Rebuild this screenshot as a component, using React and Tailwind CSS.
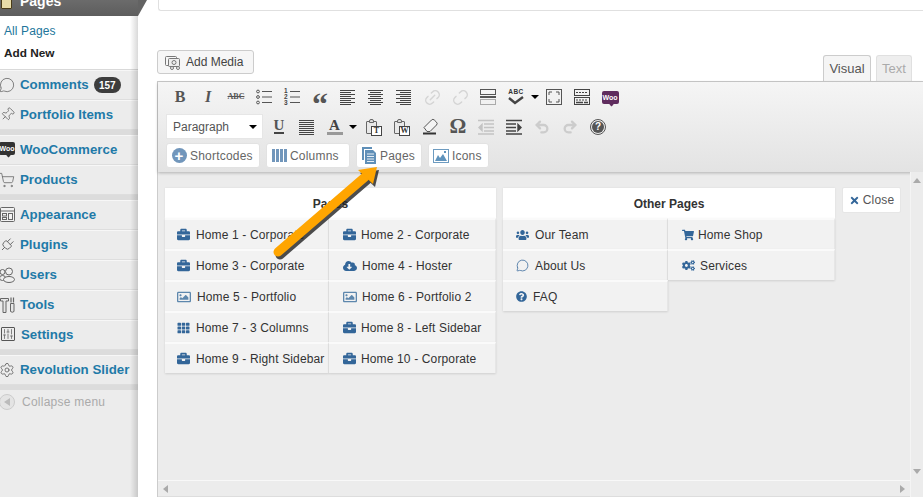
import {
  FaBriefcase, FaCloudDownloadAlt, FaRegImage, FaTh, FaUsers, FaShoppingCart, FaCogs, FaQuestionCircle, FaTimes,
} from 'react-icons/fa';
import {
  MessageCircle, Pin, ShoppingCart, Plug, SlidersVertical, Settings, Undo2, Redo2, Link2, Unlink2,
} from 'lucide-react';

const WooBadge = ({ bg }) => (
  <span className={`relative flex h-[13px] w-[17px] items-center justify-center rounded-[2px] text-[7px] font-bold leading-none text-white ${bg}`}>
    Woo
    <span className="absolute -bottom-[2px] left-[8px] h-[3px] w-[3px] rotate-45 bg-inherit" />
  </span>
);

const AppearanceIcon = () => (
  <svg width="15" height="15" viewBox="0 0 15 15" fill="#f2f2f2" stroke="#666">
    <rect x="0.5" y="0.5" width="14" height="14" rx="1" />
    <path d="M0.5 4h14" />
    <rect x="2.5" y="6.5" width="4" height="2.5" />
    <rect x="2.5" y="10.5" width="4" height="2" />
    <rect x="8.5" y="6.5" width="4" height="6" />
  </svg>
);
const UsersIcon = () => (
  <svg width="16" height="16" viewBox="0 0 16 16" fill="#eee" stroke="#666">
    <circle cx="3.5" cy="5" r="2.5" />
    <ellipse cx="3.5" cy="11" rx="3" ry="2.5" />
    <circle cx="10" cy="4.5" r="3.5" />
    <ellipse cx="10" cy="12.5" rx="5.5" ry="3" />
  </svg>
);
const ToolsIcon = () => (
  <svg width="15" height="16" viewBox="0 0 15 16" fill="#e6e6e6" stroke="#666">
    <path d="M0.5 1.5h8v2.5h-2.5v11.5h-3V4H0.5z" />
    <path d="M11 0.5v5M13.5 0.5v5" strokeWidth="1.2" />
    <path d="M10.5 6.5h3.5v8q-1.7 1.5-3.5 0z" />
  </svg>
);
const EraserIcon = () => (
  <svg width="17" height="17" viewBox="0 0 17 17">
    <path d="M2 9.5L9.5 2a2 2 0 0 1 2.8 0l2.2 2.2a2 2 0 0 1 0 2.8L8 13.5H5z" fill="#f4f4f4" stroke="#555" />
    <path d="M1 15.5h13" stroke="#333" strokeWidth="2" />
  </svg>
);
const HelpIcon = () => (
  <span className="flex h-[16px] w-[16px] items-center justify-center rounded-full border border-[#555] p-[1px]">
    <span className="flex h-full w-full items-center justify-center rounded-full bg-[#555] text-[10px] font-bold leading-none text-white">?</span>
  </span>
);

const menu = [
  [
    { label: 'Comments', icon: <MessageCircle className="h-[16px] w-[16px]" strokeWidth={1.2} />, badge: '157' },
    { label: 'Portfolio Items', icon: <Pin className="h-[15px] w-[15px] rotate-45" strokeWidth={1.3} /> },
  ],
  [
    { label: 'WooCommerce', icon: <WooBadge bg="bg-[#333]" /> },
    { label: 'Products', icon: <ShoppingCart className="h-[16px] w-[16px]" strokeWidth={1.2} /> },
  ],
  [
    { label: 'Appearance', icon: <AppearanceIcon /> },
    { label: 'Plugins', icon: <Plug className="h-[16px] w-[16px] rotate-45" strokeWidth={1.4} /> },
    { label: 'Users', icon: <UsersIcon /> },
    { label: 'Tools', icon: <ToolsIcon /> },
    { label: 'Settings', icon: <SlidersVertical className="h-[14px] w-[14px] rounded-[1px] border border-[#555]" strokeWidth={1.6} />, shift: true },
  ],
  [{ label: 'Revolution Slider', icon: <Settings className="h-[16px] w-[16px]" strokeWidth={1.3} /> }],
];

function Sidebar() {
  return (
    <aside className="relative z-10 flex h-[497px] w-[138px] shrink-0 flex-col bg-[#ececec] font-['Liberation_Sans',sans-serif]">
      <div className="relative -mt-[13px] flex h-[29px] shrink-0 items-center gap-[6px] bg-gradient-to-b from-[#777] to-[#5d5d5d] pl-[20px] text-[14px] font-bold text-white">
        <span className="absolute left-[1px] top-[9px] h-[13px] w-[11px] rounded-[1px] border border-[#4a3c18] bg-[#e8dca8]" />
        Pages
        <svg className="absolute left-full top-[13px]" width="10" height="16" viewBox="0 0 10 16">
          <polygon points="0,0 9,0 0,16" fill="#636363" />
        </svg>
      </div>
      <div className="flex h-[54px] shrink-0 flex-col gap-[7px] border-b border-[#d9d9d9] bg-white pl-[4px] pt-[8px] text-[12px] leading-[15px]">
        <span className="tracking-[0.1px] text-[#21759b]">All Pages</span>
        <span className="text-[11.8px] font-bold text-[#222]">Add New</span>
      </div>
      {menu.map((group, i) => (
        <div key={i} className="border-b-[5px] border-b-[#dcdcdc] last:border-b-0">
          {group.map((item) => (
            <div key={item.label} className="relative flex h-[30px] items-center border-b border-[#dedede] border-t border-t-[#f7f7f7] pl-[20px] text-[13.3px] font-bold text-[#1f7aa8]">
              <span className={`absolute top-[6px] flex w-[16px] justify-center text-[#666] ${item.shift ? 'left-0' : '-left-[1px]'}`}>{item.icon}</span>
              <span className={item.shift ? 'ml-[1px]' : ''}>{item.label}</span>
              {item.badge && (
                <span className="ml-[5px] flex h-[16px] w-[27px] items-center justify-center rounded-full bg-[#3d3d3d] text-[10px] text-white">{item.badge}</span>
              )}
            </div>
          ))}
        </div>
      ))}
      <div className="mt-[3px] flex items-center gap-[7px] text-[12px] tracking-[0.25px] text-[#aaa]">
        <span className="-ml-[1px] flex h-[16px] w-[16px] items-center justify-center rounded-full border border-[#ccc] bg-[#e4e4e4]">
          <span className="h-0 w-0 border-y-[4px] border-r-[6px] border-y-transparent border-r-[#bbb]" />
        </span>
        Collapse menu
      </div>
      <div className="pointer-events-none absolute bottom-0 right-0 top-[16px] w-[8px] bg-gradient-to-r from-transparent to-black/15" />
    </aside>
  );
}

// toolbar drawings
const Lines = ({ rows, color = '#444' }) => (
  <svg width="16" height="16" viewBox="0 0 16 16" stroke={color} strokeWidth="1">
    {rows.map(([x1, x2], i) => (
      <line key={i} x1={x1} x2={x2} y1={1.5 + i * 2} y2={1.5 + i * 2} />
    ))}
  </svg>
);
const left = [[0, 15], [0, 11], [0, 15], [0, 11], [0, 15], [0, 11], [0, 15], [0, 11]];
const center = [[0, 15], [2, 13], [0, 15], [2, 13], [0, 15], [2, 13], [0, 15], [2, 13]];
const right = [[0, 15], [4, 15], [0, 15], [4, 15], [0, 15], [4, 15], [0, 15], [4, 15]];
const justify = [[0, 15], [0, 15], [0, 15], [0, 15], [0, 15], [0, 15], [0, 15], [0, 15]];

const Bullets = () => (
  <svg width="16" height="16" viewBox="0 0 16 16" fill="none" stroke="#555">
    {[2.5, 8, 13.5].map((y) => (
      <g key={y}>
        <circle cx="2" cy={y} r="1.4" />
        <line x1="6" x2="16" y1={y} y2={y} />
      </g>
    ))}
  </svg>
);
const Numbers = () => (
  <span className="relative block h-[16px] w-[16px]">
    <span className="absolute left-0 top-[-1px] font-['Liberation_Sans',sans-serif] text-[6.5px] font-bold leading-[6px] text-[#444]">1<br />2<br />3</span>
    <svg className="absolute left-0 top-0" width="16" height="16" stroke="#555">
      {[2.5, 8, 13.5].map((y) => <line key={y} x1="6" x2="16" y1={y} y2={y} />)}
    </svg>
  </span>
);
const Paste = ({ letter }) => (
  <span className="relative block h-[16px] w-[16px]">
    <span className="absolute left-0 top-[2px] h-[13px] w-[11px] rounded-[1px] border border-[#666] bg-[#e8e8e8]" />
    <span className="absolute left-[3px] top-0 h-[4px] w-[5px] rounded-t-[2px] border border-[#666] bg-[#ddd]" />
    <span className="absolute bottom-[-1px] right-0 flex h-[10px] w-[11px] items-center justify-center border border-[#444] bg-white font-['Liberation_Serif',serif] text-[8px] font-bold leading-none text-[#333]">{letter}</span>
  </span>
);
const Caret = () => <span className="block h-0 w-0 border-x-[4px] border-t-[4px] border-x-transparent border-t-black" />;

const Hr = () => (
  <svg width="16" height="16" viewBox="0 0 16 16" fill="none" stroke="#555">
    <rect x="0.5" y="0.5" width="15" height="5" />
    <line x1="0" x2="16" y1="8" y2="8" strokeWidth="2" />
    <rect x="0.5" y="10.5" width="15" height="5" stroke="#aaa" />
  </svg>
);
const Spell = () => (
  <span className="flex h-[18px] w-[18px] flex-col items-center">
    <span className="font-['Liberation_Sans',sans-serif] text-[6.5px] font-bold leading-[8px] tracking-[0.5px] text-[#333]">ABC</span>
    <svg width="16" height="9" viewBox="0 0 16 9" fill="none" stroke="#444" strokeWidth="2.4"><path d="M1 2l6 5 8-6" /></svg>
  </span>
);
const Fullscreen = () => (
  <svg width="16" height="16" viewBox="0 0 16 16" fill="none" stroke="#555">
    <rect x="0.5" y="0.5" width="15" height="15" />
    <path d="M3 6V3h3M10 3h3v3M13 10v3h-3M6 13H3v-3" />
  </svg>
);
const Kitchen = () => (
  <svg width="16" height="16" viewBox="0 0 16 16" fill="none" stroke="#444">
    <rect x="0.5" y="0.5" width="15" height="6" />
    <rect x="0.5" y="8.5" width="15" height="7" />
    <path d="M2 3.5h12M2 11h12" strokeDasharray="2 1" />
    <path d="M2 13.5h7M10 13.5h4" strokeWidth="1.6" />
  </svg>
);
const Outdent = ({ color = '#c4c4c4', flip }) => (
  <svg className={flip ? '-scale-x-100' : ''} width="16" height="16" viewBox="0 0 16 16" stroke={color} strokeWidth="1.4" fill="none">
    <path d="M0 1.5h16M6 5h10M6 8.5h10M6 12h10M0 15h16" />
    <path d="M4 5.5L1 8.5l3 3z" fill={color} />
  </svg>
);

const T = ({ children, w = 'w-[28px]' }) => <span className={`flex h-[24px] shrink-0 items-center justify-center ${w}`}>{children}</span>;

const serif = "font-['Liberation_Serif',serif]";

function Toolbar() {
  return (
    <div className="flex h-[90px] shrink-0 flex-col bg-gradient-to-b from-[#f5f5f5] to-[#e3e3e3] pl-[8px] shadow-[0_1px_3px_rgba(0,0,0,0.25)]">
      <div className="flex h-[30px] shrink-0 items-center">
        <T><span className={`${serif} text-[16px] font-bold text-[#555]`}>B</span></T>
        <T><span className={`${serif} text-[16px] font-bold italic text-[#555]`}>I</span></T>
        <T><span className={`${serif} text-[8px] font-bold text-[#555] line-through`}>ABC</span></T>
        <T><Bullets /></T>
        <T><Numbers /></T>
        <T><span className={`${serif} mt-[13px] text-[32px] font-bold leading-[16px] text-[#555]`}>“</span></T>
        <T><Lines rows={left} /></T>
        <T><Lines rows={center} /></T>
        <T><Lines rows={right} /></T>
        <T><Link2 className="h-[19px] w-[19px] -rotate-45 text-[#d4d4d4]" strokeWidth={1.8} /></T>
        <T><Unlink2 className="h-[19px] w-[19px] -rotate-45 text-[#d4d4d4]" strokeWidth={1.8} /></T>
        <T><Hr /></T>
        <T><Spell /></T>
        <T w="w-[10px]"><Caret /></T>
        <T><Fullscreen /></T>
        <T><Kitchen /></T>
        <T><WooBadgeBig /></T>
      </div>
      <div className="mt-[2px] flex h-[25px] shrink-0 items-center">
        <div className="flex h-[25px] w-[97px] shrink-0 items-center justify-between border border-[#e6e6e6] bg-white pl-[6px] pr-[5px] font-['Liberation_Sans',sans-serif] text-[12px] text-[#555]">
          Paragraph
          <Caret />
        </div>
        <span className="w-[2px] shrink-0" />
        <T><span className={`${serif} border-b-2 border-[#444] text-[15px] font-bold leading-[13px] text-[#555]`}>U</span></T>
        <T><Lines rows={justify} /></T>
        <T w="w-[27px]">
          <span className={`${serif} w-[16px] border-b-[3px] border-[#999] text-center text-[15px] font-bold leading-[14px] text-[#444]`}>A</span>
        </T>
        <T w="w-[10px]"><Caret /></T>
        <span className="w-[2px] shrink-0" />
        <T><Paste letter="T" /></T>
        <T><Paste letter="W" /></T>
        <T><EraserIcon /></T>
        <T><span className={`${serif} text-[21px] font-bold leading-none text-[#555]`}>Ω</span></T>
        <T><Outdent /></T>
        <T><Outdent color="#444" flip /></T>
        <T><Undo2 className="h-[16px] w-[16px] text-[#ccc]" strokeWidth={3.5} /></T>
        <T><Redo2 className="h-[16px] w-[16px] text-[#ccc]" strokeWidth={3.5} /></T>
        <T><HelpIcon /></T>
      </div>
      <div className="mt-[4px] flex gap-[6px] font-['Liberation_Sans',sans-serif] text-[12px] tracking-[0.2px] text-[#666]">
        <Btn w="w-[94px]" icon={<span className="flex h-[15px] w-[15px] items-center justify-center rounded-full bg-[#7196bb] text-[15px] font-bold leading-none text-white">+</span>} label="Shortcodes" />
        <Btn w="w-[84px]" icon={<span className="flex h-[13px] w-[15px] gap-[1px]">{[0, 1, 2, 3].map((c) => <span key={c} className="flex-1 bg-[#7196bb]" />)}</span>} label="Columns" />
        <Btn w="w-[66px]" icon={<PagesIcon />} label="Pages" />
        <Btn w="w-[61px]" icon={<PictureIcon />} label="Icons" />
      </div>
    </div>
  );
}

const WooBadgeBig = () => <WooBadge bg="bg-[#5f2c5e]" />;

const PagesIcon = () => (
  <svg width="15" height="17" viewBox="0 0 15 17">
    <path d="M0 0h10v2H2v11H0z" fill="#5f8fb8" />
    <path d="M3 3h8l3 3v11H3z" fill="#5f8fb8" />
    <path d="M5 7h7M5 9.5h7M5 12h7M5 14.5h7" stroke="#e6eef5" />
  </svg>
);
const PictureIcon = () => (
  <svg width="16" height="14" viewBox="0 0 16 14">
    <rect x="0.5" y="0.5" width="15" height="13" fill="#fff" stroke="#6d9bc0" />
    <path d="M2 12l3-6 2 3 3-4 4 7z" fill="#5f93bc" />
    <rect x="11" y="2" width="2" height="2" fill="#5f93bc" />
  </svg>
);

const Btn = ({ w, icon, label }) => (
  <span className={`flex h-[25px] shrink-0 items-center gap-[3px] rounded-[3px] border border-[#e2e2e2] bg-white pl-[4px] ${w}`}>
    <span className="flex w-[16px] justify-center">{icon}</span>
    {label}
  </span>
);

const bc = 'h-[13px] w-[13px] shrink-0 text-[#336699]';
const pic = 'h-[14px] w-[14px] shrink-0 text-[#5d87ad]';
const pages = [
  [<FaBriefcase className={bc} />, 'Home 1 - Corporate'],
  [<FaBriefcase className={bc} />, 'Home 2 - Corporate'],
  [<FaBriefcase className={bc} />, 'Home 3 - Corporate'],
  [<FaCloudDownloadAlt className="h-[14px] w-[14px] shrink-0 text-[#336699]" />, 'Home 4 - Hoster'],
  [<FaRegImage className={pic} />, 'Home 5 - Portfolio'],
  [<FaRegImage className={pic} />, 'Home 6 - Portfolio 2'],
  [<FaTh className="h-[12px] w-[13px] shrink-0 text-[#336699]" />, 'Home 7 - 3 Columns'],
  [<FaBriefcase className={bc} />, 'Home 8 - Left Sidebar'],
  [<FaBriefcase className={bc} />, 'Home 9 - Right Sidebar'],
  [<FaBriefcase className={bc} />, 'Home 10 - Corporate'],
];
const others = [
  [<FaUsers className="h-[14px] w-[13px] shrink-0 scale-y-110 text-[#336699]" />, 'Our Team'],
  [<FaShoppingCart className="mr-[-1px] h-[12px] w-[12px] shrink-0 text-[#336699]" />, 'Home Shop'],
  [<MessageCircle className="h-[13px] w-[13px] shrink-0 text-[#336699]" strokeWidth={1.4} />, 'About Us'],
  [<FaCogs className="h-[13px] w-[13px] shrink-0 text-[#336699]" />, 'Services'],
  [<FaQuestionCircle className="h-[11px] w-[11px] shrink-0 text-[#336699]" />, 'FAQ'],
];

function Panel({ title, items, w, cols, pad }) {
  return (
    <div className={`flex shrink-0 flex-col ${w}`}>
      <div className="flex h-[30px] items-center justify-center bg-white pt-[1px] text-[12px] font-bold text-[#333] shadow-[0_0_2px_rgba(0,0,0,0.08)]">{title}</div>
      <div className={`grid items-start ${cols}`}>
        {items.map(([icon, label]) => (
          <div key={label} className={`flex h-[31px] items-center gap-[6px] border-r border-t-2 border-r-[#e6e6e6] border-t-[#fafafa] bg-[#f2f2f2] text-[#333] shadow-[0_1px_2px_rgba(0,0,0,0.12)] even:gap-[5px] even:pl-[14px] ${pad}`}>
            {icon}
            <span className="whitespace-nowrap tracking-[0.14px]">{label}</span>
          </div>
        ))}
      </div>
    </div>
  );
}

function Scrollbars() {
  return (
    <>
      <div className="absolute bottom-0 right-0 top-0 flex w-[13px] flex-col items-center justify-between border-l border-[#f4f4f4] bg-[#ececec] pt-[6px]">
        <span className="h-0 w-0 border-x-[4px] border-b-[5px] border-x-transparent border-b-[#aaa]" />
        <span className="mb-[23px] h-0 w-0 border-x-[4px] border-t-[5px] border-x-transparent border-t-[#aaa]" />
      </div>
      <div className="absolute bottom-0 left-0 right-[13px] flex h-[17px] items-center justify-between border-b border-t border-b-[#ddd] border-t-[#f8f8f8] bg-[#ececec] pl-[5px] pr-[5px]">
        <span className="h-0 w-0 border-y-[4px] border-r-[5px] border-y-transparent border-r-[#aaa]" />
        <span className="h-0 w-0 border-y-[4px] border-l-[5px] border-y-transparent border-l-[#aaa]" />
      </div>
    </>
  );
}

function Arrow() {
  return (
    <svg className="pointer-events-none absolute left-[260px] top-[155px]" width="130" height="110" viewBox="0 0 130 110">
      <g transform="translate(2 3)" opacity="0.8">
        <path d="M18 97L105 22" stroke="#222" strokeWidth="9" strokeLinecap="round" />
        <polygon points="117,12 98,15 113,29" fill="#222" />
      </g>
      <path d="M18 97L105 22" stroke="#ffa500" strokeWidth="9" strokeLinecap="round" />
      <polygon points="117,12 98,15 113,29" fill="#ffa500" />
    </svg>
  );
}

export default function App() {
  return (
    <div className="relative flex h-[497px] w-[923px] overflow-hidden bg-white font-['Liberation_Sans',sans-serif]">
      <Sidebar />
      <main className="flex min-w-0 flex-1 flex-col">
        <div className="ml-[20px] h-[11px] shrink-0 rounded-bl-[3px] border-b border-l border-[#e0e0e0]" />
        <div className="ml-[19px] mt-[39px] flex h-[31px] shrink-0 items-start justify-between">
          <div className="flex h-[24px] w-[97px] items-center gap-[4px] rounded-[3px] border border-[#ccc] bg-[#f6f6f6] pl-[7px] text-[12px] text-[#444]">
            <svg width="17" height="15" viewBox="0 0 17 15" fill="none" stroke="#777">
              <rect x="0.5" y="1.5" width="11" height="9" rx="1" />
              <rect x="3.5" y="3.5" width="11" height="8" rx="1" fill="#eee" />
              <circle cx="9" cy="7.5" r="2" />
              <circle cx="7" cy="13" r="1.5" />
              <circle cx="13" cy="13" r="1.5" />
            </svg>
            Add Media
          </div>
          <div className="mr-[11px] mt-[5px] flex items-start gap-[5px] text-[13px]">
            <span className="flex h-[27px] w-[48px] items-center justify-center rounded-t-[3px] border border-b-0 border-[#ccc] bg-[#f5f5f5] text-[#555]">Visual</span>
            <span className="flex h-[26px] w-[36px] items-center justify-center rounded-t-[3px] border border-b-0 border-[#e0e0e0] bg-[#eee] text-[#aaa]">Text</span>
          </div>
        </div>
        <div className="ml-[19px] flex min-h-0 flex-1 flex-col border-l border-t border-[#ccc] bg-[#ececec]">
          <Toolbar />
          <div className="relative min-h-0 flex-1">
            <div className="flex items-start gap-[7px] pl-[7px] pt-[16px] text-[12px]">
              <Panel title="Pages" items={pages} w="w-[331px]" cols="grid-cols-[164px_1fr]" pad="pl-[12px]" />
              <Panel title="Other Pages" items={others} w="w-[332px]" cols="grid-cols-[165px_1fr]" pad="pl-[13px]" />
              <span className="flex h-[26px] w-[59px] -translate-y-[1px] items-center justify-center gap-[3px] rounded-[2px] border border-[#e6e6e6] bg-white tracking-[0.2px] text-[#555]">
                <FaTimes className="h-[11px] w-[11px] text-[#336699]" />
                Close
              </span>
            </div>
            <Scrollbars />
          </div>
        </div>
      </main>
      <Arrow />
    </div>
  );
}
